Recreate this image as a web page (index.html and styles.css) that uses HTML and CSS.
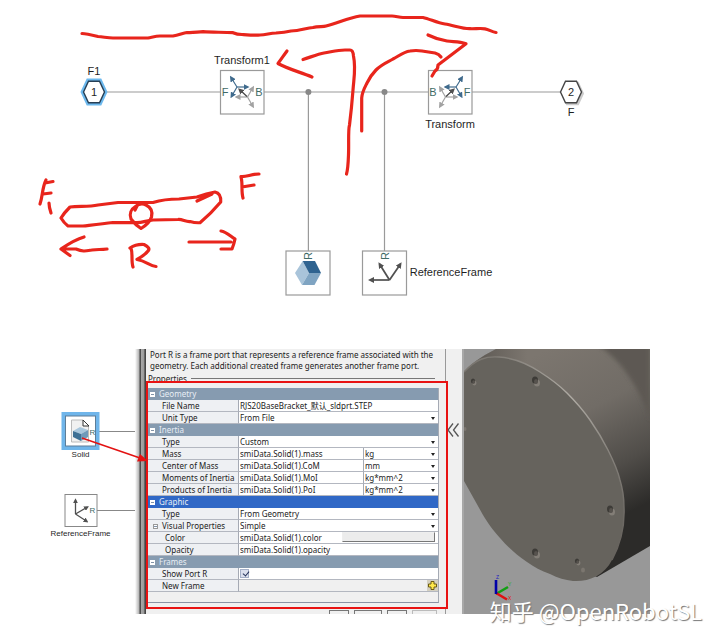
FILE: index.html
```html
<!DOCTYPE html>
<html lang="en">
<head>
<meta charset="utf-8">
<title>Solid block parameters</title>
<link rel="stylesheet" href="styles.css">
</head>
<body>
<main class="page">
  <svg class="model" viewBox="0 0 720 349" role="img" aria-label="Model diagram">
    <defs>
      <marker id="tip-blue" viewBox="0 0 6 6" refX="4" refY="3" markerWidth="6" markerHeight="6" markerUnits="userSpaceOnUse" orient="auto"><path d="M0 0L6 3L0 6Z" fill="#3f6a8c"/></marker>
      <marker id="tip-gray" viewBox="0 0 6 6" refX="4" refY="3" markerWidth="6" markerHeight="6" markerUnits="userSpaceOnUse" orient="auto"><path d="M0 0L6 3L0 6Z" fill="#a2a2a2"/></marker>
      <marker id="tip-dark" viewBox="0 0 6 6" refX="4" refY="3" markerWidth="6" markerHeight="6" markerUnits="userSpaceOnUse" orient="auto"><path d="M0 0L6 3L0 6Z" fill="#505050"/></marker>
      <g id="rotation">
        <g fill="none" stroke="#3f6a8c" stroke-width="1.2">
          <path d="M237 87L231 77.500" marker-end="url(#tip-blue)"/><path d="M237 87H247.500" marker-end="url(#tip-blue)"/><path d="M237 87L231.500 96.500" marker-end="url(#tip-blue)"/>
        </g>
        <g fill="none" stroke="#a2a2a2" stroke-width="1.2">
          <path d="M247.500 97L253 87.500" marker-end="url(#tip-gray)"/><path d="M247.500 97H236.500" marker-end="url(#tip-gray)"/><path d="M247.500 97L253 106.500" marker-end="url(#tip-gray)"/>
        </g>
        <path d="M247 96.500L239.500 89.500" fill="none" stroke="#444" stroke-width="1.200" marker-end="url(#tip-dark)"/>
      </g>
      <path id="hexagon" d="M-10.500 0L-5.500 -10.800H5.500L10.500 0L5.500 10.800H-5.500Z"/>
    </defs>
    <g fill="none" stroke="#9a9a9a" stroke-width="1.2">
      <path d="M106 92H220M264 92H428M472 92H560M308.400 92V251M384.500 92V251"/>
      <g fill="#fff"><rect x="220.500" y="70.500" width="43.500" height="43.500"/><rect x="428.500" y="70.500" width="43.500" height="43.500"/><rect x="286" y="251" width="44" height="44"/><rect x="362.500" y="251" width="44" height="44"/></g>
    </g>
    <circle cx="308.400" cy="92" r="3" fill="#888"/><circle cx="384.500" cy="92" r="3" fill="#888"/>
    <use href="#rotation"/>
    <use href="#rotation" transform="translate(693 0) scale(-1 1)"/>
    <use href="#hexagon" x="94" y="92" fill="#fff" stroke="#6db9ee" stroke-width="5.500"/>
    <use href="#hexagon" x="94" y="92" fill="#fff" stroke="#263f55" stroke-width="1.400"/>
    <use href="#hexagon" x="572.500" y="93.500" fill="#bbb" stroke="#ccc" stroke-width="2"/>
    <use href="#hexagon" x="571" y="92" fill="#fff" stroke="#444" stroke-width="1.400"/>
    <path d="M295 273L302.700 261L309 273L302 285Z" fill="#a9c4da"/>
    <path d="M302.700 261H315L321 273H309Z" fill="#2f6390"/>
    <path d="M309 273H321L314.500 285H302Z" fill="#7fa4c2"/>
    <g fill="none" stroke="#505050" stroke-width="1.700">
      <path d="M389.500 280H370" marker-end="url(#tip-dark)"/><path d="M389.500 280L379.500 264" marker-end="url(#tip-dark)"/><path d="M389.500 280L400.500 264" marker-end="url(#tip-dark)"/>
    </g>
    <g class="label" text-anchor="middle">
      <text x="94" y="75">F1</text><text x="94" y="96">1</text>
      <text x="242" y="64">Transform1</text><text x="450" y="128">Transform</text>
      <text x="571" y="96">2</text><text x="571" y="116">F</text>
      <text x="451" y="276">ReferenceFrame</text>
    </g>
    <g class="port" text-anchor="middle">
      <text x="225" y="96">F</text><text x="259" y="96">B</text><text x="433" y="96">B</text><text x="467" y="96">F</text>
      <text transform="translate(312 256) rotate(-90)">R</text><text transform="translate(389 256) rotate(-90)">R</text>
    </g>
    <g class="ink">
      <path d="M82 33.500C86 33.500 92 35 98 36.500C104 37 108 38 113 38H148C153 37 156 36 160 36H173C179 35 183 33 187 32.500C192 33 197 32 203 31.700C213 32.500 223 32 233 32.700C236 34 239 34.500 242 34.500C249 35 255 35.500 260 35C266 35 270 33 276 33C282 32.500 286 32 291 31C300 31 306 28 313 27.500C318 26 323 27 326 26C338 23 348 18 360 16H392C396 16 399 17.500 403 17.500H423C430 19 437 23 445 24C454 25.500 463 29 470 28.700C475 29 480 28 485 28.800C489 29.500 492 32 496 32.500"/>
      <path d="M287 51C284 55 282 58 278 63.500C288 69 300 72 312 77"/>
      <path d="M303 59.500C311 57 318 54 324 53C331 52 337 50 345 50H350Q353 50 353.500 56C356 68 354 77 353 90C352 103 351 113 349.500 125C348 130 349 143 348.500 155Q348 169 346.500 174"/>
      <path d="M361.700 131V98C362 92 365 87 367 83C369 79 372 74 376 70C382 64 388 62 393 59C399 56 403 52 410 51Q416 50 422 51L435 53Q439 54 441 57"/>
      <path d="M428 35C434 38 441 40 447 41C453 42 459 41 466 43.700L438 65C438 69 437 70 435 71L432 76"/>
      <path d="M46 180C42 188 43 195 40 204M45 183L53 181.500M43 194L51 193M49 203C49 207 50 210 51 213"/>
      <path d="M61 218C64 213 66 211 70 207C80 206 89 207 98 205L118 202.500H153C161 200 170 199 179 199L197 197C205 194 209 193 215 192C220 193 221 197 220.700 202C214 210 208 216 200 222.700Q195 223 190 221.500C186 222 182 219 178 219.500L153 220C146 221 142 222.500 137 222.700L113 222.500C102 224 92 225 83 226H68Q64 223 61 218M197 201L212 194"/>
      <path d="M136 206C131 209 129 214 131 219C134 223 137 226 141 228.500C145 226 150 222 151.500 217C153 211 150 207 146 205C142 203 139 204 136 206M135 210L138 204"/>
      <path d="M84 237C74 240 67 245 61 249L70 255.500M62 249H76C83 252 86 251 92 250C98 249 100 250 107 249"/>
      <path d="M131 248C133 254 131 261 133 267M130 248Q136 244 144 244.500Q151 248 148 251Q145 255 137 259.500C146 261 150 266 156 266.500"/>
      <path d="M189 242H231M221 231C227 232 231 237 235 239Q234 244 232 249Q229 249 221 249"/>
      <path d="M241 177C243 184 241 191 243 198M241 176.500C247 177 251 174 259 174M242 187L254 185"/>
    </g>
  </svg>

  <section class="workspace">
    <svg class="blocks" viewBox="0 349 135 265" role="img" aria-label="Solid and ReferenceFrame blocks">
      <defs>
        <marker id="tip-small" viewBox="0 0 6 6" refX="4" refY="3" markerWidth="5" markerHeight="5" markerUnits="userSpaceOnUse" orient="auto"><path d="M0 0L6 3L0 6Z" fill="#505050"/></marker>
      </defs>
      <path d="M98 431.500H140M97 510.500H140" stroke="#888" stroke-width="1.200"/>
      <rect x="63.500" y="414" width="34" height="34" fill="#fff" stroke="#6fb5ea" stroke-width="4"/>
      <rect x="65.500" y="416" width="30" height="30" fill="none" stroke="#5c7d98"/>
      <path d="M71.500 420H83L88.500 426V442H71.500Z" fill="#f1f1f1" stroke="#bbb"/>
      <path d="M83 420V426H89Z" fill="#fff" stroke="#333"/>
      <path d="M73 431L80 427L88 430L81 434Z" fill="#a9c7dd"/><path d="M73 431L81 434V441L73 437Z" fill="#3d7095"/><path d="M81 434L88 430V437L81 441Z" fill="#6f9aba"/>
      <rect x="65" y="494.500" width="32" height="32" fill="#fff" stroke="#888"/>
      <g fill="none" stroke="#505050" stroke-width="1.300"><path d="M75.500 514V500" marker-end="url(#tip-small)"/><path d="M75.500 514L87.500 507" marker-end="url(#tip-small)"/><path d="M75.500 514L87 521.500" marker-end="url(#tip-small)"/></g>
      <g class="label small" text-anchor="middle"><text x="80.500" y="457">Solid</text><text x="80.500" y="536">ReferenceFrame</text></g>
      <g class="port small" text-anchor="middle"><text x="92.500" y="435">R</text><text x="92.500" y="513">R</text></g>
    </svg>

    <form class="panel">
      <div class="frame-edge"></div>
      <div class="panel-body">
        <p class="description">Port R is a frame port that represents a reference frame associated with the geometry. Each additional created frame generates another frame port.</p>
        <div class="legend"><span>Properties</span></div>
        <div class="highlight">
          <table class="properties">
            <colgroup><col class="col-name"><col class="col-value"><col class="col-unit"></colgroup>
            <tbody>
              <tr class="group"><th colspan="3"><i class="toggle"></i>Geometry</th></tr>
              <tr><th><label for="file">File Name</label></th><td colspan="2"><input id="file" value="RJS20BaseBracket_默认_sldprt.STEP"></td></tr>
              <tr><th><label for="unit">Unit Type</label></th><td colspan="2" class="drop"><select id="unit"><option>From File</option></select></td></tr>
              <tr class="group"><th colspan="3"><i class="toggle"></i>Inertia</th></tr>
              <tr><th><label for="itype">Type</label></th><td colspan="2" class="drop"><select id="itype"><option>Custom</option></select></td></tr>
              <tr><th><label for="mass">Mass</label></th><td><input id="mass" value="smiData.Solid(1).mass"></td><td class="drop"><select aria-label="Mass unit"><option>kg</option></select></td></tr>
              <tr><th><label for="com">Center of Mass</label></th><td><input id="com" value="smiData.Solid(1).CoM"></td><td class="drop"><select aria-label="Center of Mass unit"><option>mm</option></select></td></tr>
              <tr><th><label for="moi">Moments of Inertia</label></th><td><input id="moi" value="smiData.Solid(1).MoI"></td><td class="drop"><select aria-label="Moments of Inertia unit"><option>kg*mm^2</option></select></td></tr>
              <tr><th><label for="poi">Products of Inertia</label></th><td><input id="poi" value="smiData.Solid(1).PoI"></td><td class="drop"><select aria-label="Products of Inertia unit"><option>kg*mm^2</option></select></td></tr>
              <tr class="group selected"><th colspan="3"><i class="toggle"></i>Graphic</th></tr>
              <tr><th><label for="gtype">Type</label></th><td colspan="2" class="drop"><select id="gtype"><option>From Geometry</option></select></td></tr>
              <tr class="parent"><th><i class="toggle"></i><label for="visual">Visual Properties</label></th><td colspan="2" class="drop"><select id="visual"><option>Simple</option></select></td></tr>
              <tr class="child"><th><label for="color">Color</label></th><td colspan="2"><div class="color-cell"><input id="color" value="smiData.Solid(1).color"><button type="button" class="swatch" aria-label="Choose color"></button></div></td></tr>
              <tr class="child"><th><label for="opacity">Opacity</label></th><td colspan="2"><input id="opacity" value="smiData.Solid(1).opacity"></td></tr>
              <tr class="group"><th colspan="3"><i class="toggle"></i>Frames</th></tr>
              <tr><th><label for="port">Show Port R</label></th><td colspan="2"><input id="port" class="tick" type="checkbox" checked></td></tr>
              <tr class="muted"><th>New Frame</th><td colspan="2"><button type="button" class="add" aria-label="Add frame"><svg viewBox="0 0 11 11"><path d="M4 1.500H7V4H9.500V7H7V9.500H4V7H1.500V4H4Z" fill="#ffe84a" stroke="#6b5a12"/></svg></button></td></tr>
            </tbody>
          </table>
        </div>
        <div class="footer"><button type="button" aria-label="OK"></button><button type="button" class="wide" aria-label="Cancel"></button><button type="button" aria-label="Help"></button><button type="button" class="off" aria-label="Apply" disabled></button></div>
      </div>
      <button type="button" class="collapse" aria-label="Collapse panel"><svg viewBox="0 0 14 16"><path d="M7 1.500L2 8L7 14.500M12.500 1.500L7.500 8L12.500 14.500" fill="none" stroke="#555" stroke-width="1.300"/></svg></button>
    </form>

    <svg class="viewer" viewBox="462 349 188 265" preserveAspectRatio="xMidYMid slice" role="img" aria-label="Solid preview">
      <defs>
        <linearGradient id="side" gradientUnits="userSpaceOnUse" x1="545" y1="350" x2="640" y2="535"><stop offset="0" stop-color="#7c766f"/><stop offset=".35" stop-color="#716c66"/><stop offset=".65" stop-color="#504d49"/><stop offset=".88" stop-color="#2c2b29"/><stop offset="1" stop-color="#2c2b29"/></linearGradient>
        <linearGradient id="left-side" x1="0" x2="1"><stop offset="0" stop-color="#55514c"/><stop offset="1" stop-color="#55514c" stop-opacity="0"/></linearGradient>
        <linearGradient id="rim" gradientUnits="userSpaceOnUse" x1="470" y1="357" x2="624" y2="540"><stop offset="0" stop-color="#77736d"/><stop offset=".4" stop-color="#b0aca5"/><stop offset=".7" stop-color="#85817b"/><stop offset="1" stop-color="#67635e"/></linearGradient>
        <filter id="soft"><feGaussianBlur stdDeviation="2"/></filter>
        <clipPath id="cyl"><path d="M464 372Q474 360 496 349H650V546L597 577L560 560Z"/></clipPath>
        <g id="hole"><ellipse cx="2" cy="3" rx="3" ry="3.500" fill="#837e77"/><ellipse rx="3" ry="3.600" fill="#3d3b37"/><ellipse cx="1" cy="1.500" rx="2" ry="2.500" fill="#57534e"/></g>
      </defs>
      <rect x="462" y="349" width="188" height="265" fill="#989898"/>
      <g clip-path="url(#cyl)">
        <rect x="462" y="349" width="188" height="235" fill="url(#side)"/>
        <rect x="462" y="349" width="65" height="30" fill="url(#left-side)"/>
        <path d="M598 345C620 360 638 384 650 420V345Z" fill="#5d5953" filter="url(#soft)"/>
      </g>
      <path d="M464 372C476 359 486 356 499 357C514 358 528 364 540 372C551 379 559 385 567 393C576 402 583 410 590 420C597 430 603 440 608 450C614 462 618 471 620 480C623 490 624 499 624 507C625 527 620 545 612 560C604 576 588 582 573 581C565 580 558 578 550 574C541 571 534 567 527 562C516 555 508 547 500 538C492 529 488 523 483 515L464 481Z" fill="#66635d"/>
      <path d="M464 372C476 359 486 356 499 357C514 358 528 364 540 372C551 379 559 385 567 393C576 402 583 410 590 420C597 430 603 440 608 450C614 462 618 471 620 480C623 490 624 499 624 507C625 527 620 545 612 560" fill="none" stroke="url(#rim)" stroke-width="1.400"/>
      <use href="#hole" transform="translate(473 381) scale(.7)"/><use href="#hole" x="535" y="380"/><use href="#hole" x="610" y="509"/><use href="#hole" x="535" y="552"/><use href="#hole" transform="translate(577 561) scale(.7)"/><ellipse cx="583" cy="570" rx="2" ry="2.500" fill="#7b766f"/><ellipse cx="465" cy="429" rx="1.500" ry="2" fill="#7b766f"/>
      <rect x="462" y="349" width="2" height="265" fill="#a8a8a8"/>
      <g fill="none" stroke-width="2.600"><path d="M496 594L508 587" stroke="#12a012"/><path d="M496 593L507 599.500" stroke="#e01010"/><path d="M496 594V580" stroke="#0000a8"/></g>
      <g class="axis"><text x="496" y="579" fill="#2222c0">Z</text><text x="508" y="586" fill="#20b020">Y</text><text x="508" y="600" fill="#e01010">X</text></g>
    </svg>
    <svg class="pointer" viewBox="0 349 720 265" aria-hidden="true"><path d="M82 438L140 458" stroke="#e31212" stroke-width="1.500"/><path d="M148 461L137 461.500L140 454Z" fill="#e31212"/></svg>
    <p class="watermark">知乎 @OpenRobotSL</p>
  </section>
</main>
</body>
</html>
```

FILE: styles.css
```css
* { box-sizing: border-box; }

body {
  margin: 0;
  background: #fff;
  color: #222;
  font-family: "Liberation Sans", Arial, sans-serif;
}

.page { padding-bottom: 29px; }
.model { display: block; width: 100%; }

.label { font-size: 11px; fill: #1f1f1f; }
.port { font-size: 11px; fill: #3f6b66; }
.small { font-size: 8px; }
.ink { fill: none; stroke: #e8251c; stroke-width: 3.2; stroke-linecap: round; stroke-linejoin: round; }
.axis { font-size: 5px; }

.workspace {
  position: relative;
  display: grid;
  grid-template-columns: minmax(0, 135fr) minmax(0, 327fr) minmax(0, 188fr) minmax(0, 70fr);
}
.blocks { width: 100%; }
.viewer { width: 100%; height: 100%; }
.pointer { position: absolute; top: 0; left: 0; width: 100%; pointer-events: none; }

.panel {
  display: flex;
  overflow: hidden;
  background: #f0f0f0;
  font-family: "Noto Sans", "Noto Sans CJK SC", sans-serif;
  font-size: 8px;
  line-height: 11px;
}
.frame-edge {
  flex: none;
  width: 11px;
  background: linear-gradient(90deg, #fff 0, #b5b5b5 4px, #444 5px, #555 6px, #a8a8a8 6px, #999 9px, #333 10px, #555 11px);
}
.panel-body { flex: 1; min-width: 0; border-right: 1px solid #999; }
.description { margin: 0; padding: 0 4px; line-height: 11px; }
.legend {
  display: flex;
  align-items: center;
  gap: 4px;
  height: 10px;
  margin: 0 10px 0 2px;
  padding-top: 5px;
}
.legend::after { content: ""; flex: 1; border-top: 1px solid #777; }

.highlight {
  position: relative;
  margin-right: -3px;
  padding: 5px 7px 4px 0;
  border: 2px solid #e81313;
  background: #f0f0f0;
}
.properties {
  width: 100%;
  table-layout: fixed;
  border-spacing: 0;
  padding-bottom: 10px;
  border-right: 1px solid #a5aab4;
  border-bottom: 1px solid #8a93a5;
}
.col-name { width: 91px; }
.col-unit { width: 75px; }
.properties th,
.properties td {
  height: 12px;
  padding: 0;
  border-bottom: 1px solid #b3b7c0;
  text-align: left;
  font-weight: normal;
  white-space: nowrap;
}
.properties th { padding-left: 14px; border-right: 1px solid #a5aab4; background: #eef0f3; }
.properties td { background: #fff; }
.properties td + td { border-left: 1px solid #a5aab4; }
.properties .group th { padding-left: 2px; border-color: #869bb0; background: #869bb0; color: #e8eef5; }
.properties .selected th { border-color: #3068c6; background: #3068c6; }
.properties .parent th { padding-left: 5px; }
.properties .child th { padding-left: 17px; }
.properties .muted td { background: #f0f0f0; }

.toggle {
  display: inline-block;
  width: 5px;
  height: 5px;
  margin-right: 4px;
  background: linear-gradient(#8193a8, #8193a8) center / 3px 1px no-repeat #fff;
}
.parent .toggle { border: 1px solid #999; }

input,
select {
  display: block;
  width: 100%;
  height: 11px;
  margin: 0;
  padding: 0 1px;
  border: 0;
  appearance: none;
  background: transparent;
  color: #222;
  font: inherit;
}
.drop { position: relative; }
.drop::after {
  content: "";
  position: absolute;
  top: 5px;
  right: 3px;
  border: 2px solid transparent;
  border-top: 3px solid #222;
  border-bottom: 0;
  pointer-events: none;
}
.color-cell { display: flex; }
.swatch {
  flex: none;
  width: 93px;
  height: 10px;
  margin-right: 3px;
  padding: 0;
  border: 1px solid #777;
  border-top-color: #eee;
  border-left-color: #eee;
  background: #ececec;
}
.tick {
  width: 9px;
  height: 9px;
  margin: 1px;
  border: 1px solid #a5b0c8;
  background: #dbe0ee;
}
.tick:checked::before {
  content: "";
  display: block;
  width: 3px;
  height: 5px;
  margin-left: 2px;
  border: solid #26345c;
  border-width: 0 1px 1px 0;
  transform: rotate(40deg);
}
.add {
  display: block;
  width: 11px;
  height: 11px;
  margin-left: auto;
  padding: 0;
  border: 0;
  background: #d4d0c0;
}
.add svg { display: block; }

.footer {
  display: flex;
  justify-content: flex-end;
  gap: 5px;
  height: 5px;
  padding: 1px 8px 0 0;
  overflow: hidden;
}
.footer button {
  flex: none;
  width: 20px;
  height: 20px;
  padding: 0;
  border: 1px solid #777;
  background: #f0f0f0;
}
.footer .wide { width: 28px; }
.footer .off { width: 25px; border-color: #bbb; }

.collapse {
  flex: none;
  align-self: flex-start;
  width: 16px;
  margin-top: 73px;
  padding: 0;
  border: 0;
  background: none;
}
.collapse svg { display: block; width: 14px; height: 16px; }

.watermark {
  position: absolute;
  right: 2.5%;
  bottom: -12px;
  margin: 0;
  color: #fff;
  font-family: "Noto Sans CJK SC", sans-serif;
  font-size: 22px;
  line-height: 32px;
  white-space: nowrap;
  text-shadow: 1px 1px 1px #777;
}
```
